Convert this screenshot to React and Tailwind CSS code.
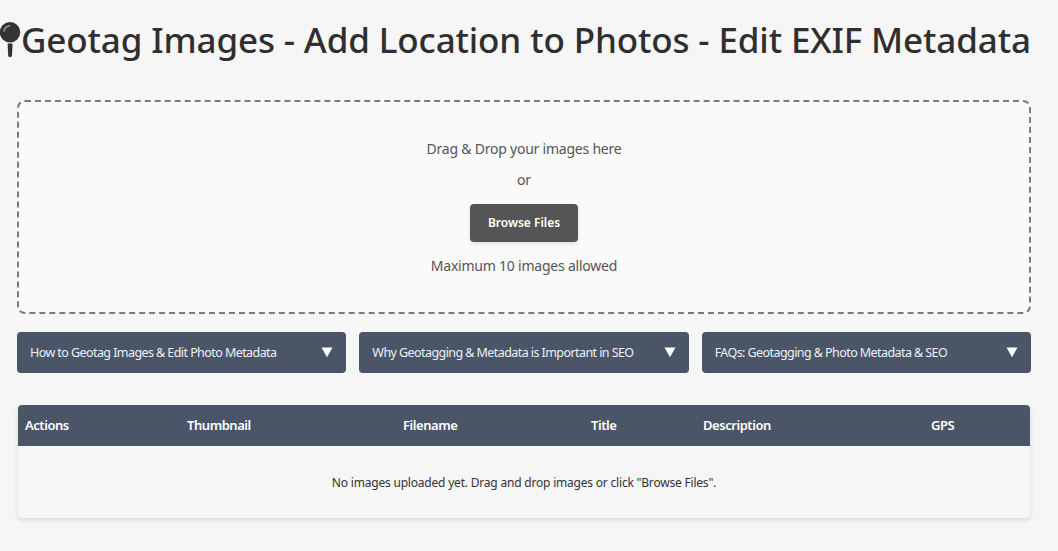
function Accordion({ label }) {
  return (
    <button className="flex h-[41px] flex-1 items-center justify-between rounded bg-[#4a5568] px-[13px] pt-[1px] text-left text-[12.5px] tracking-[-0.57px] whitespace-nowrap text-[#eef0f3]">
      <span>{label}</span>
      <svg width="12" height="12" viewBox="0 0 12 12" className="mb-[2px]"><path d="M0.5 1.5H11.5L6 11.2Z" fill="#ffffff" /></svg>
    </button>
  );
}

const cols = [
  ["Actions", "w-[162px]"],
  ["Thumbnail", "w-[216px]"],
  ["Filename", "w-[188px]"],
  ["Title", "w-[112px]"],
  ["Description", "w-[228px]"],
  ["GPS", "w-[106px]"],
];

export default function App() {
  return (
    <div className="min-h-[551px] overflow-hidden bg-[#f6f6f7] pl-[17px] pr-[27px] font-['Noto_Sans','Open_Sans',sans-serif] text-[#333333]">
      <h1 className="relative flex h-[82px] items-center whitespace-nowrap pb-[3px] pl-[4px] text-[35px] font-medium leading-none tracking-[-0.13px] text-[#2f2f2f]">
        <svg width="21" height="36" viewBox="0 0 21 36" className="absolute left-[-17px] top-[22px]">
          <path d="M7.6 21.6H12.6L12 33.6Q11.9 35.2 10.1 35.2Q8.3 35.2 8.2 33.6Z" fill="#333333" />
          <circle cx="10" cy="10.2" r="10.2" fill="#333333" />
          <path d="M4 9C4.8 6 7 4.2 9.6 3.8" stroke="#9a9a9a" strokeWidth="1.5" fill="none" strokeLinecap="round" />
        </svg>
        Geotag Images - Add Location to Photos - Edit EXIF Metadata
      </h1>

      <section className="mt-[18px] flex h-[214px] flex-col items-center rounded-lg border-2 border-dashed border-[#7b7b7b] bg-[#fafafa] pt-[37px] text-[14px] tracking-[-0.22px] text-[#555555]">
        <p className="leading-5">Drag &amp; Drop your images here</p>
        <p className="mt-[11px] leading-5">or</p>
        <button className="mt-[14px] h-[38px] w-[108px] rounded bg-[#555555] text-[12px] font-semibold tracking-normal text-white shadow-[0_2px_4px_rgba(0,0,0,0.1)]">
          Browse Files
        </button>
        <p className="mt-[14px] leading-5">Maximum 10 images allowed</p>
      </section>

      <div className="mt-[18px] flex gap-[13px]">
        <Accordion label="How to Geotag Images & Edit Photo Metadata" />
        <Accordion label="Why Geotagging & Metadata is Important in SEO" />
        <Accordion label="FAQs: Geotagging & Photo Metadata & SEO" />
      </div>

      <div className="mx-px mt-[32px] overflow-hidden rounded bg-[#f6f6f7] shadow-[0_2px_5px_rgba(0,0,0,0.12)]">
        <table className="w-full table-fixed border-collapse">
          <thead>
            <tr className="h-[41px] bg-[#4a5568] text-left text-[13px] font-semibold tracking-[-0.45px] text-white">
              {cols.map(([name, w]) => (
                <th key={name} className={`${w} pl-[7px] font-semibold`}>{name}</th>
              ))}
            </tr>
          </thead>
          <tbody>
            <tr className="h-[72px]">
              <td colSpan={6} className="pt-[2px] text-center text-[12px] tracking-[-0.2px] text-[#333333]">
                No images uploaded yet. Drag and drop images or click "Browse Files".
              </td>
            </tr>
          </tbody>
        </table>
      </div>
    </div>
  );
}
